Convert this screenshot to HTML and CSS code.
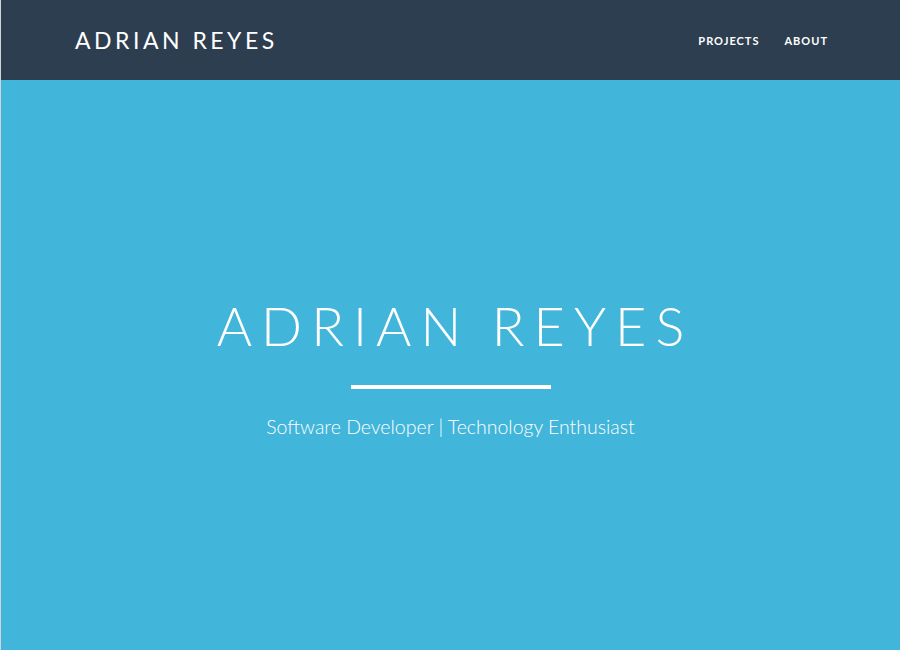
FILE: index.html
```html
<!DOCTYPE html>
<html lang="en">
<head>
<meta charset="utf-8">
<title>Adrian Reyes</title>
<link rel="stylesheet" href="styles.css">
</head>
<body>
<div class="page">
  <header class="topbar">
    <a class="brand" href="#">ADRIAN REYES</a>
    <nav class="nav">
      <a href="#">PROJECTS</a>
      <a href="#">ABOUT</a>
    </nav>
  </header>
  <section class="hero">
    <h1 class="hero-title">ADRIAN REYES</h1>
    <hr class="hero-rule">
    <p class="hero-sub">Software Developer | Technology Enthusiast</p>
  </section>
</div>
</body>
</html>
```

FILE: styles.css
```css
html, body {
  margin: 0;
  padding: 0;
  height: 100%;
}
body {
  font-family: Lato, "Liberation Sans", sans-serif;
  background: #42b5da;
  border-left: 1px solid #cfd4d8;
  box-sizing: border-box;
}
.page {
  display: flex;
  flex-direction: column;
  height: 650px;
}
.topbar {
  height: 80px;
  flex: none;
  background: #2d3e50;
  display: flex;
  align-items: center;
  justify-content: space-between;
  padding: 0 72px 0 74px;
}
.brand {
  color: #fff;
  text-decoration: none;
  font-size: 23px;
  font-weight: 400;
  letter-spacing: 3.5px;
}
.nav {
  display: flex;
  gap: 25px;
}
.nav a {
  color: #fff;
  text-decoration: none;
  font-size: 11px;
  font-weight: 700;
  letter-spacing: 1px;
}
.hero {
  flex: 1;
  display: flex;
  flex-direction: column;
  align-items: center;
  justify-content: center;
  color: #fff;
}
.hero-title {
  margin: 0;
  padding: 2px 0 0 9px;
  font-size: 54px;
  font-weight: 300;
  letter-spacing: 9px;
  word-spacing: -2px;
  line-height: 1.2;
}
.hero-rule {
  width: 200px;
  height: 4px;
  border: 0;
  background: #fff;
  margin: 26px 0 26px;
}
.hero-sub {
  margin: 0;
  font-size: 19.5px;
  font-weight: 300;
}
```
